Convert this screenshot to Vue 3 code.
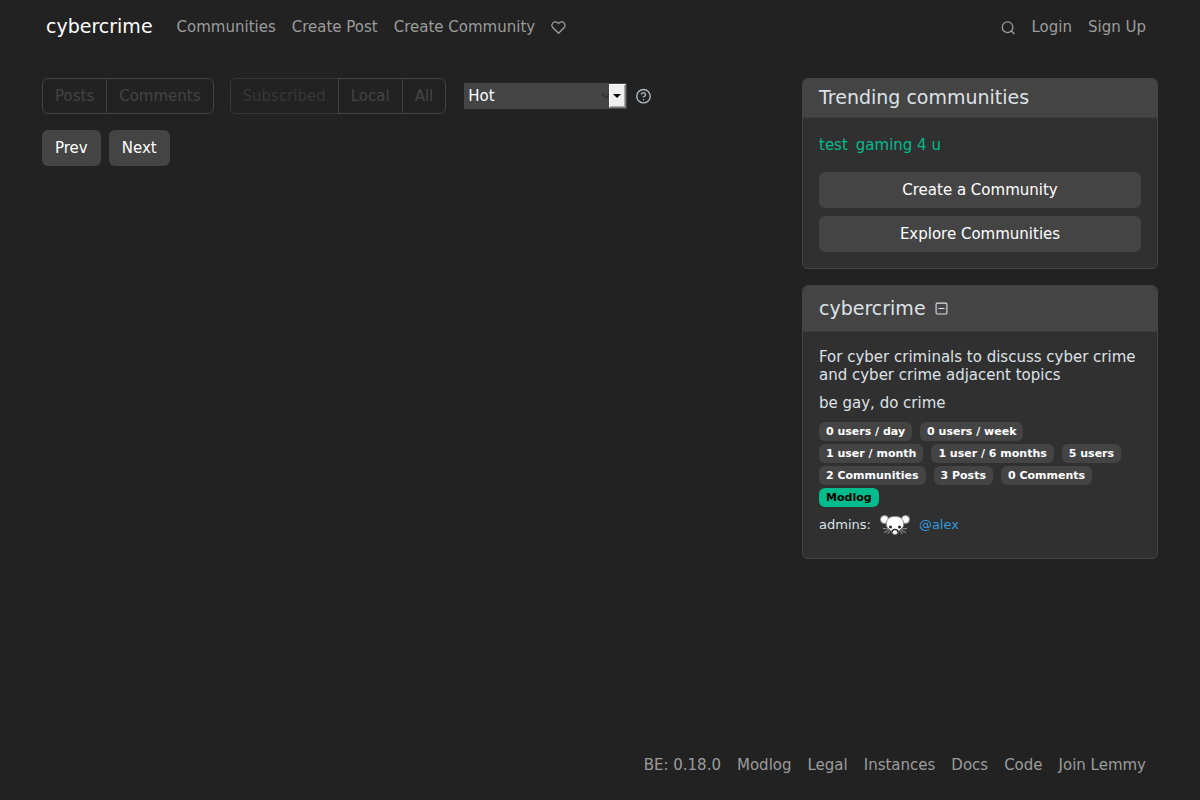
<script setup>
import { ref } from 'vue'

const dataType = ref('')
const listing = ref('')
const sort = ref('Hot')

const navLinks = ['Communities', 'Create Post', 'Create Community']
const types = [
  { label: 'Posts', disabled: false },
  { label: 'Comments', disabled: false }
]
const listings = [
  { label: 'Subscribed', disabled: true },
  { label: 'Local', disabled: false },
  { label: 'All', disabled: false }
]
const sorts = ['Hot', 'Active', 'New', 'Old', 'Most Comments', 'New Comments']
const trending = ['test', 'gaming 4 u']
const stats = [
  '0 users / day',
  '0 users / week',
  '1 user / month',
  '1 user / 6 months',
  '5 users',
  '2 Communities',
  '3 Posts',
  '0 Comments'
]
const footerLinks = ['Modlog', 'Legal', 'Instances', 'Docs', 'Code', 'Join Lemmy']
</script>

<template>
  <div class="page">
    <header class="navbar container">
      <a class="brand" href="#">cybercrime</a>
      <nav class="nav" aria-label="Main">
        <a v-for="l in navLinks" :key="l" href="#">{{ l }}</a>
        <a href="#" class="icon-link" aria-label="Support Lemmy">
          <svg class="icon" viewBox="0 0 24 24"><path d="M20.8 4.600a5.500 5.500 0 0 0-7.800 0L12 5.700l-1-1.100a5.500 5.500 0 0 0-7.800 7.800L12 21.200l8.800-8.800a5.500 5.500 0 0 0 0-7.800z" /></svg>
        </a>
      </nav>
      <nav class="nav account" aria-label="Account">
        <a href="#" class="icon-link" aria-label="Search">
          <svg class="icon" viewBox="0 0 24 24"><circle cx="10.500" cy="11.500" r="8.500" /><path d="M17 18L21 22" /></svg>
        </a>
        <a href="#">Login</a>
        <a href="#">Sign Up</a>
      </nav>
    </header>

    <div class="container content">
      <main class="main">
        <div class="filters">
          <div class="group" role="radiogroup" aria-label="Type">
            <label v-for="t in types" :key="t.label" class="toggle">
              <input v-model="dataType" type="radio" name="type" :value="t.label" />{{ t.label }}
            </label>
          </div>
          <div class="group" role="radiogroup" aria-label="Listing">
            <label v-for="t in listings" :key="t.label" class="toggle" :class="{ disabled: t.disabled }">
              <input v-model="listing" type="radio" name="listing" :value="t.label" :disabled="t.disabled" />{{ t.label }}
            </label>
          </div>
          <div class="sort">
            <span class="select-box">
              <select v-model="sort" aria-label="Sort">
                <option v-for="s in sorts" :key="s">{{ s }}</option>
              </select>
              <svg class="chevron" viewBox="0 0 8 8"><path d="M0 1.500L4 5.500L8 1.500" /></svg>
              <span class="arrow"><svg viewBox="0 0 8 4"><path d="M0 0h8L4 4z" /></svg></span>
            </span>
            <a href="#" class="icon-link" aria-label="Sorting help">
              <svg class="icon" viewBox="0 0 24 24"><circle cx="12" cy="11.500" r="9.500" /><path d="M9.100 8.500a3 3 0 0 1 5.800 1c0 2-3 3-3 3M12 16.500h.01" /></svg>
            </a>
          </div>
        </div>
        <div class="pager">
          <button class="btn" type="button">Prev</button>
          <button class="btn" type="button">Next</button>
        </div>
      </main>

      <aside class="side">
        <section class="card">
          <header class="card-head"><h2>Trending communities</h2></header>
          <div class="card-body">
            <ul class="trending">
              <li v-for="t in trending" :key="t"><a href="#">{{ t }}</a></li>
            </ul>
            <div class="stack">
              <a class="btn" href="#">Create a Community</a>
              <a class="btn" href="#">Explore Communities</a>
            </div>
          </div>
        </section>

        <section class="card">
          <header class="card-head site">
            <h2>cybercrime</h2>
            <button type="button" class="collapse" aria-label="Collapse">
              <svg class="icon square" viewBox="0 0 24 24"><rect x="2" y="2" width="20" height="20" rx="2" /><path d="M7 12h10" /></svg>
            </button>
          </header>
          <div class="card-body">
            <h3>For cyber criminals to discuss cyber crime and cyber crime adjacent topics</h3>
            <p class="about">be gay, do crime</p>
            <ul class="badges">
              <li v-for="s in stats" :key="s"><span class="badge">{{ s }}</span></li>
              <li><a class="badge modlog" href="#">Modlog</a></li>
            </ul>
            <div class="admins">
              <span>admins:</span>
              <a href="#">
                <svg class="mouse" viewBox="0 0 30 24" aria-hidden="true">
                  <path d="M8 16L3 15.500M8.500 17.500L4 19.500M10 18L7.500 21M22 16L27 15.500M21.500 17.500L26 19.500M20 18L22.500 21" fill="none" stroke="#999" />
                  <g fill="#fff" stroke="#888">
                    <circle cx="4.500" cy="6.500" r="4" />
                    <circle cx="25.500" cy="6.500" r="4" />
                    <path d="M6.500 9C8 4.500 11 3.500 15 3.500S22 4.500 23.500 9C24.500 13 22 16.500 18.500 18C18 22.500 12 22.500 11.500 18C8 16.500 5.500 13 6.500 9z" />
                  </g>
                  <circle cx="10.500" cy="14" r="1.500" fill="#222" />
                  <circle cx="19.500" cy="14" r="1.500" fill="#222" />
                  <path d="M12 19.500a3 3 0 0 1 6 0" fill="none" stroke="#333" stroke-width="1.500" />
                </svg>
                <span>@alex</span>
              </a>
            </div>
          </div>
        </section>
      </aside>
    </div>

    <footer class="container footer">
      <span>BE: 0.18.0</span>
      <a v-for="l in footerLinks" :key="l" href="#">{{ l }}</a>
    </footer>
  </div>
</template>

<style>
body {
  background: #222;
}
</style>

<style scoped>
.page {
  min-height: 100vh;
  display: flex;
  flex-direction: column;
  background: #222;
  color: #dee2e6;
  font: 15px/22px "DejaVu Sans", Verdana, sans-serif;
}
.page *,
.page *::before {
  box-sizing: border-box;
}
.container {
  width: 100%;
  max-width: 1140px;
  margin: 0 auto;
}
a {
  color: inherit;
  text-decoration: none;
}
h2,
h3,
p,
ul {
  margin: 0;
  padding: 0;
  font-weight: 400;
  list-style: none;
}
.icon {
  display: block;
  width: 15px;
  height: 15px;
  fill: none;
  stroke: currentColor;
  stroke-width: 2;
  stroke-linecap: round;
  stroke-linejoin: round;
}
.navbar {
  display: flex;
  align-items: center;
  min-height: 54px;
  padding: 0 24px 0 16px;
  box-shadow: 0 2px 4px rgba(0, 0, 0, 0.075);
  color: #9c9c9c;
}
.brand {
  margin-right: 24px;
  padding-bottom: 2px;
  color: #fff;
  font-size: 19px;
}
.nav {
  display: flex;
  align-items: center;
  gap: 16px;
}
.account {
  margin-left: auto;
}
.content {
  display: flex;
  flex: 1;
  align-items: flex-start;
  gap: 24px;
  padding: 24px 12px;
}
.main {
  flex: 1;
}
.side {
  width: 356px;
  display: grid;
  gap: 16px;
}
.filters {
  display: flex;
  flex-wrap: wrap;
  align-items: center;
  gap: 16px;
}
.group {
  display: flex;
}
.toggle {
  position: relative;
  height: 36px;
  padding: 6px 12px;
  border: 1px solid #444;
  color: #444;
  cursor: pointer;
}
.toggle + .toggle {
  margin-left: -1px;
}
.toggle:first-child {
  border-radius: 6px 0 0 6px;
}
.toggle:last-child {
  border-radius: 0 6px 6px 0;
}
.toggle.disabled {
  color: #383838;
  border-color: #383838;
}
.toggle input {
  position: absolute;
  opacity: 0;
  margin: 0;
}
.sort {
  display: flex;
  align-items: center;
  gap: 8px;
  margin-left: 2px;
  color: #adb5bd;
}
.sort .icon {
  width: 17px;
  height: 17px;
}
.select-box {
  position: relative;
  display: block;
  width: 163px;
}
select {
  display: block;
  width: 100%;
  height: 26px;
  padding: 0 20px 0 4px;
  border: 0;
  border-radius: 0;
  appearance: none;
  background: #444;
  color: #fff;
  font: inherit;
}
.chevron {
  position: absolute;
  top: 9px;
  right: 17px;
  width: 8px;
  height: 8px;
  fill: none;
  stroke: #303030;
  stroke-width: 1.5;
  pointer-events: none;
}
.arrow {
  position: absolute;
  top: 1px;
  right: 1px;
  display: grid;
  place-items: center;
  width: 17px;
  height: 24px;
  padding-right: 2px;
  border: 1px solid;
  border-color: #fff #777 #777 #fff;
  background: #efefef;
  box-shadow: inset -1px -1px #aaa;
  pointer-events: none;
}
.arrow svg {
  width: 8px;
  height: 4px;
}
.pager {
  display: flex;
  gap: 8px;
  margin-top: 16px;
}
.btn {
  display: block;
  height: 36px;
  padding: 7px 13px;
  border: 0;
  border-radius: 6px;
  background: #444;
  color: #fff;
  font: inherit;
  text-align: center;
}
.card {
  border: 1px solid #444;
  border-radius: 6px;
  background: #303030;
  overflow: hidden;
}
.card-head {
  display: flex;
  align-items: center;
  padding: 7px 16px 8px;
  border-bottom: 1px solid #3c3c3c;
  background: #444;
}
.card-head h2 {
  font-size: 19px;
  line-height: 23px;
}
.card-head.site {
  gap: 9px;
  min-height: 46px;
}
.collapse {
  padding: 0;
  border: 0;
  background: none;
  color: inherit;
}
.square {
  width: 13px;
  height: 13px;
}
.card-body {
  padding: 16px;
}
.trending {
  display: flex;
  gap: 8px;
  margin-bottom: 16px;
  color: #00bc8c;
}
.stack {
  display: grid;
  gap: 8px;
}
h3 {
  margin-bottom: 8px;
  font-size: 15px;
  line-height: 18px;
}
.about {
  margin-bottom: 8px;
}
.badges {
  display: flex;
  flex-wrap: wrap;
  row-gap: 3px;
}
.badges li {
  margin-right: 8px;
}
.badge {
  display: block;
  height: 19px;
  padding: 0 7px;
  border-radius: 6px;
  background: #444;
  color: #fff;
  font-size: 11px;
  font-weight: 700;
  line-height: 19px;
}
.modlog {
  background: #00bc8c;
  color: #000;
}
.admins {
  display: flex;
  align-items: center;
  gap: 9px;
  margin: 6px 0 5px;
  font-size: 13px;
  line-height: 20px;
}
.admins a {
  display: flex;
  align-items: center;
  gap: 9px;
  color: #3498db;
}
.mouse {
  width: 30px;
  height: 24px;
}
.footer {
  display: flex;
  flex-wrap: wrap;
  justify-content: flex-end;
  gap: 16px;
  padding: 24px;
  color: #9c9c9c;
}
</style>
